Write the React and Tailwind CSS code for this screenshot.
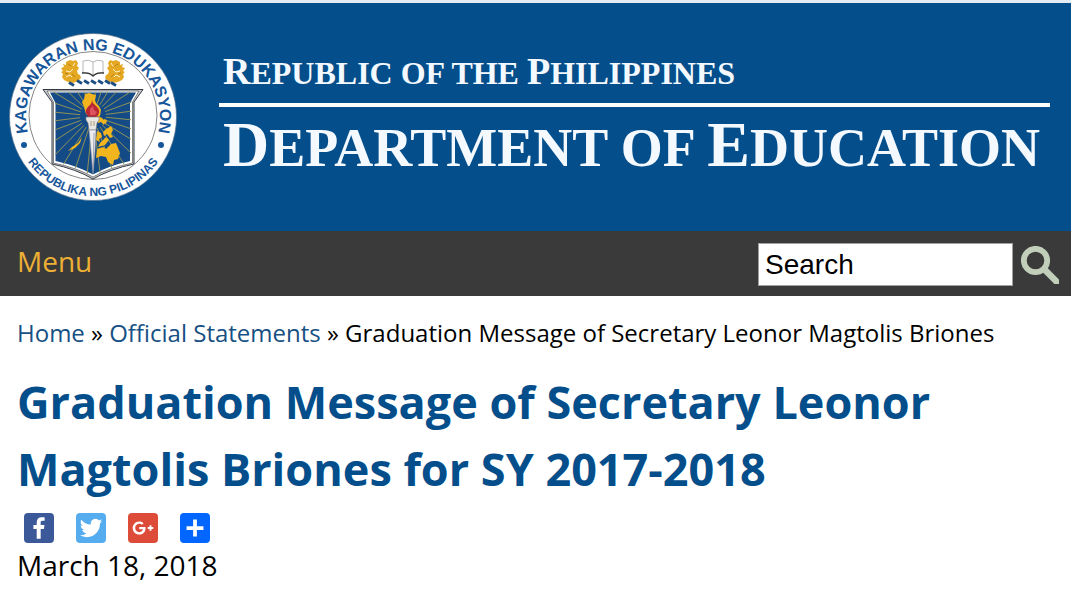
import React from "react";

const RAYS = Array.from({ length: 28 }, (_, i) => {
  const a = (i / 28) * Math.PI * 2 + 0.1;
  return [93 + Math.cos(a) * 13, 116 + Math.sin(a) * 13, 93 + Math.cos(a) * 75, 116 + Math.sin(a) * 75];
});

function Lion() {
  return (
    <g>
      <path
        fill="#e5a823"
        d="M66 62l4-2 3 1 3-1 2 3-1 3 2 2-2 3 1 3 2 1 1 3-3 3-5 2-5-1-4-2-2-3 1-3-2-2 2-1-2-3 3-1-1-3 3 1z"
      />
      <path fill="none" stroke="#fff3cf" strokeWidth="1" d="M66 71l4 1 3-3M66 77l4-2 2 2M75 63l-2 3" />
      <path fill="none" stroke="#a87818" strokeWidth="0.8" d="M68 64l3 2M72 74l3 3M65 73l3 1" />
    </g>
  );
}

function Seal() {
  return (
    <svg viewBox="9 33 168 168" className="size-[168px] shrink-0" role="img" aria-label="Department seal">
      <defs>
        <path id="seal-top" d="M93 184a67 67 0 0 1 0-134a67 67 0 0 1 0 134" />
        <path id="seal-bottom" d="M14 117a79 79 0 0 0 158 0" />
        <clipPath id="seal-shield">
          <path d="M48 92H137L131 103V162Q108 168 93 176Q78 168 55 162V103Z" />
        </clipPath>
      </defs>
      <circle cx="93" cy="117" r="83.5" fill="#fff" stroke="#55708c" strokeWidth="0.7" />
      <circle cx="93" cy="115.500" r="64" fill="#fff" stroke="#777" strokeWidth="0.9" />
      <text fill="#17569a" fontSize="16" fontWeight="700" textAnchor="middle" className="font-['Liberation_Sans',sans-serif]">
        <textPath href="#seal-top" startOffset="50%">KAGAWARAN NG EDUKASYON</textPath>
      </text>
      <text fill="#17569a" fontSize="12" fontWeight="700" textAnchor="middle" className="font-['Liberation_Sans',sans-serif]">
        <textPath href="#seal-bottom" startOffset="50%">REPUBLIKA NG PILIPINAS</textPath>
      </text>
      <circle cx="24" cy="145" r="3" fill="#17569a" />
      <circle cx="161" cy="145" r="3" fill="#17569a" />
      <Lion />
      <g transform="translate(186 0) scale(-1 1)">
        <Lion />
      </g>
      <path fill="#fff" stroke="#999" strokeWidth="0.7" d="M83 61q6-2 10 1q4-3 10-1v12q-6-1-10 2q-4-3-10-2zM93 62v13" />
      <path fill="none" stroke="#333" strokeWidth="1.300" d="M82 73q7-1 11 3q4-4 11-3" />
      {[71, 79, 86, 93, 100, 107, 113].map((x, i) => (
        <path key={x} stroke="#1c4d83" strokeWidth="2.800" d={`M${x - 2} ${i % 6 === 0 ? 82.500 : 80.500}l5 3`} />
      ))}
      <path fill="#c9cbd0" stroke="#343a44" strokeWidth="1" d="M43 89.500H143L134 102V164Q110 169 93 179Q76 169 52 164V102Z" />
      <path fill="#fff" stroke="#555" strokeWidth="0.7" d="M47 91H139L132.500 102V163Q108 168 93 177Q78 168 53.500 163V102Z" />
      <g clipPath="url(#seal-shield)">
        <path fill="#144b87" d="M50 92.500H136L130 103V161Q108 166 93 174.500Q78 166 55.500 161V103Z" />
        {RAYS.map(([x1, y1, x2, y2], i) => (
          <line key={i} x1={x1} y1={y1} x2={x2} y2={y2} stroke="#8f9257" strokeWidth="1" />
        ))}
        <path fill="#f2b51d" d="M85 94l4-1 3 1 4 1-1 5 1 3 3 3 2 4-1 6-4 1-7-1-3-2-2-7-2-5 2-3z" />
        <path fill="#f2b51d" d="M82 137l-4 6-6 4-4 4 7-3 5-5zM98 116l4 2 3 3-1 4-3-3-3 1zM104 119l3 1-1 4-2-1zM108 128l3-2 2 4-2 4 2 3-3 1-3-4-3 2-1-4 3-3zM97 131l4 2 1 4-3 2 1 3-4-2zM103 140l3-3 3 3-4 5-7 2 2-4z" />
        <path fill="#f2b51d" d="M97 149l6-2 3 2 5-5 5-1 2 5 2 5-2 6-4 1-1 5-5-3-2-5-5-1-5 2z" />
      </g>
      <path fill="#b72734" d="M92 100q0 3 3 5q5 4 4 8q-1 3-3 4h-7q-4-3-3-7q1-3 4-5q2-2 2-5z" />
      <path fill="#dd5260" d="M90 109l3-3 1 4 3 2-2 3h-5z" />
      <path fill="#e7e7e6" stroke="#777" strokeWidth="0.6" d="M86 117H99V120L97 123L96 130H89L88 123L86 120Z" />
      <path stroke="#a78350" strokeWidth="0.8" d="M91 121v5M94 121v5" />
      <path fill="#ececf0" stroke="#85899a" strokeWidth="0.6" d="M89 130H96L95 151L93 174L91 151Z" />
      <path stroke="#9295a0" strokeWidth="0.8" d="M94 133L93 170" />
    </svg>
  );
}

const SHARES = [
  {
    name: "Facebook",
    bg: "bg-[#3b5998]",
    d: "M17.78 27.5V17.008h3.522l.527-4.09h-4.05v-2.61c0-1.182.33-1.99 2.023-1.99h2.166V4.66c-.375-.05-1.66-.16-3.155-.16-3.123 0-5.26 1.905-5.26 5.405v3.016h-3.53v4.09h3.53V27.5h4.223z",
  },
  {
    name: "Twitter",
    bg: "bg-[#55acee]",
    d: "M28 8.557a9.913 9.913 0 0 1-2.828.775 4.93 4.93 0 0 0 2.166-2.725 9.738 9.738 0 0 1-3.13 1.194 4.92 4.92 0 0 0-3.593-1.55 4.924 4.924 0 0 0-4.794 6.049c-4.09-.21-7.72-2.17-10.15-5.15a4.942 4.942 0 0 0-.665 2.477c0 1.71.87 3.214 2.19 4.1a4.968 4.968 0 0 1-2.23-.616v.06c0 2.39 1.7 4.38 3.952 4.83-.414.115-.85.174-1.297.174-.318 0-.626-.03-.928-.086a4.935 4.935 0 0 0 4.6 3.42 9.893 9.893 0 0 1-6.114 2.107c-.398 0-.79-.023-1.175-.068a13.953 13.953 0 0 0 7.55 2.213c9.056 0 14.01-7.507 14.01-14.013 0-.213-.005-.426-.015-.637.96-.695 1.795-1.56 2.455-2.55z",
  },
  {
    name: "Google Plus",
    bg: "bg-[#dd4b39]",
    d: "M27 15h-2v-2h-2v2h-2v2h2v2h2v-2h2m-15-2v2.4h3.97c-.16 1.03-1.2 3.02-3.97 3.02-2.39 0-4.34-1.98-4.34-4.42s1.95-4.42 4.34-4.42c1.36 0 2.27.58 2.79 1.08l1.9-1.83C15.47 9.69 13.89 9 12 9c-3.87 0-7 3.13-7 7s3.13 7 7 7c4.04 0 6.72-2.84 6.72-6.84 0-.46-.05-.81-.11-1.16H12z",
  },
  { name: "Share", bg: "bg-[#0166ff]", d: "M14 7h4v18h-4zM7 14h18v4H7z" },
];

export default function App() {
  return (
    <div className="min-h-screen bg-white font-['Open_Sans',sans-serif] text-black">
      <header className="flex items-start gap-[42px] border-t-[3px] border-[#e4ebf3] bg-[#044f8b] pt-[30px] pr-[21px] pb-[30px] pl-[9px]">
        <Seal />
        <div className="min-w-0 flex-1 pt-3 font-['Liberation_Serif',serif] font-bold whitespace-nowrap text-[#f3f9ff]">
          <p className="pl-1 text-[32px] leading-[52px]">
            <span className="text-[38px]">R</span>EPUBLIC OF THE <span className="text-[38px]">P</span>HILIPPINES
          </p>
          <div className="mt-1 h-1 bg-white" />
          <p className="pl-1 text-[54px] leading-[76px]">
            <span className="text-[64px]">D</span>EPARTMENT OF <span className="text-[64px]">E</span>DUCATION
          </p>
        </div>
      </header>

      <nav className="flex h-[65px] items-center justify-between bg-[#3a3a3a] pr-3 pl-[17px]">
        <button type="button" className="pb-[6px] text-[28px] leading-[38px] text-[#edb034]">
          Menu
        </button>
        <form className="flex items-center gap-2 pt-[2px]" onSubmit={(e) => e.preventDefault()}>
          <input
            type="text"
            aria-label="Search"
            defaultValue="Search"
            className="h-[43px] w-[255px] border border-[#a0a0a0] bg-white px-[6px] font-['Liberation_Sans',sans-serif] text-[28px] text-black"
          />
          <button type="submit" aria-label="Submit search">
            <svg viewBox="0 0 38 38" className="block size-[38px]" fill="none" stroke="#c0ceba">
              <circle cx="14.500" cy="14.500" r="11.700" strokeWidth="5.800" />
              <path d="M22 22L40 40" strokeWidth="6.500" />
            </svg>
          </button>
        </form>
      </nav>

      <main className="px-[17px] pt-5">
        <nav aria-label="Breadcrumb" className="text-[24px] leading-[34px]">
          <a href="#" className="text-[#175083]">Home</a> » <a href="#" className="text-[#175083]">Official Statements</a>{" "}
          » Graduation Message of Secretary Leonor Magtolis Briones
        </nav>
        <h1 className="mt-[18px] text-[45px] leading-[67px] font-bold text-[#044f8b]">
          Graduation Message of Secretary Leonor Magtolis Briones for SY 2017-2018
        </h1>
        <div className="mt-[11px] flex gap-[22px] pl-[7px]">
          {SHARES.map((s) => (
            <a key={s.name} href="#" aria-label={s.name} className={`size-[30px] rounded-[4px] ${s.bg}`}>
              <svg viewBox="0 0 32 32" className="size-full" fill="#fff">
                <path d={s.d} />
              </svg>
            </a>
          ))}
        </div>
        <p className="mt-[3px] text-[28px] leading-[38px]">March 18, 2018</p>
      </main>
    </div>
  );
}
